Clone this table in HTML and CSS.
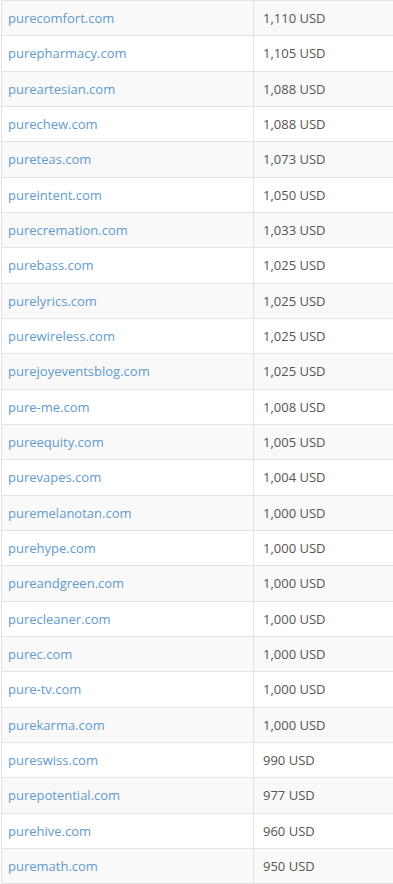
FILE: index.html
```html
<!DOCTYPE html>
<html>
<head>
<meta charset="utf-8">
<link rel="stylesheet" href="styles.css">
</head>
<body>
<div class="wrap">
<table class="domains">
<tbody>
<tr><td class="name"><a href="#">purecomfort.com</a></td><td class="price">1,110 USD</td></tr>
<tr><td class="name"><a href="#">purepharmacy.com</a></td><td class="price">1,105 USD</td></tr>
<tr><td class="name"><a href="#">pureartesian.com</a></td><td class="price">1,088 USD</td></tr>
<tr><td class="name"><a href="#">purechew.com</a></td><td class="price">1,088 USD</td></tr>
<tr><td class="name"><a href="#">pureteas.com</a></td><td class="price">1,073 USD</td></tr>
<tr><td class="name"><a href="#">pureintent.com</a></td><td class="price">1,050 USD</td></tr>
<tr><td class="name"><a href="#">purecremation.com</a></td><td class="price">1,033 USD</td></tr>
<tr><td class="name"><a href="#">purebass.com</a></td><td class="price">1,025 USD</td></tr>
<tr><td class="name"><a href="#">purelyrics.com</a></td><td class="price">1,025 USD</td></tr>
<tr><td class="name"><a href="#">purewireless.com</a></td><td class="price">1,025 USD</td></tr>
<tr><td class="name"><a href="#">purejoyeventsblog.com</a></td><td class="price">1,025 USD</td></tr>
<tr><td class="name"><a href="#">pure-me.com</a></td><td class="price">1,008 USD</td></tr>
<tr><td class="name"><a href="#">pureequity.com</a></td><td class="price">1,005 USD</td></tr>
<tr><td class="name"><a href="#">purevapes.com</a></td><td class="price">1,004 USD</td></tr>
<tr><td class="name"><a href="#">puremelanotan.com</a></td><td class="price">1,000 USD</td></tr>
<tr><td class="name"><a href="#">purehype.com</a></td><td class="price">1,000 USD</td></tr>
<tr><td class="name"><a href="#">pureandgreen.com</a></td><td class="price">1,000 USD</td></tr>
<tr><td class="name"><a href="#">purecleaner.com</a></td><td class="price">1,000 USD</td></tr>
<tr><td class="name"><a href="#">purec.com</a></td><td class="price">1,000 USD</td></tr>
<tr><td class="name"><a href="#">pure-tv.com</a></td><td class="price">1,000 USD</td></tr>
<tr><td class="name"><a href="#">purekarma.com</a></td><td class="price">1,000 USD</td></tr>
<tr><td class="name"><a href="#">pureswiss.com</a></td><td class="price">990 USD</td></tr>
<tr><td class="name"><a href="#">purepotential.com</a></td><td class="price">977 USD</td></tr>
<tr><td class="name"><a href="#">purehive.com</a></td><td class="price">960 USD</td></tr>
<tr><td class="name"><a href="#">puremath.com</a></td><td class="price">950 USD</td></tr>
</tbody>
</table>
</div>
</body>
</html>
```

FILE: styles.css
```css
html, body {
  margin: 0;
  padding: 0;
  background: #fff;
}
.wrap {
  width: 393px;
  overflow: hidden;
}
.domains {
  width: 400px;
  border-collapse: collapse;
  font-family: "Open Sans", "DejaVu Sans", sans-serif;
  font-size: 13px;
  margin-left: 1px;
}
.domains td {
  border: 1px solid #e3e3e3;
  padding: 8px 8px;
  line-height: 18.33px;
  height: 18.33px;
  text-align: left;
  vertical-align: middle;
  white-space: nowrap;
}
.domains tr:nth-child(odd) td {
  background: #f9f9f9;
}
.domains td.name {
  width: 237px;
  padding-left: 6px;
}
.domains td.price {
  color: #555;
  padding-left: 9px;
}
.domains a {
  color: #5f9bd0;
  text-decoration: none;
}
```
